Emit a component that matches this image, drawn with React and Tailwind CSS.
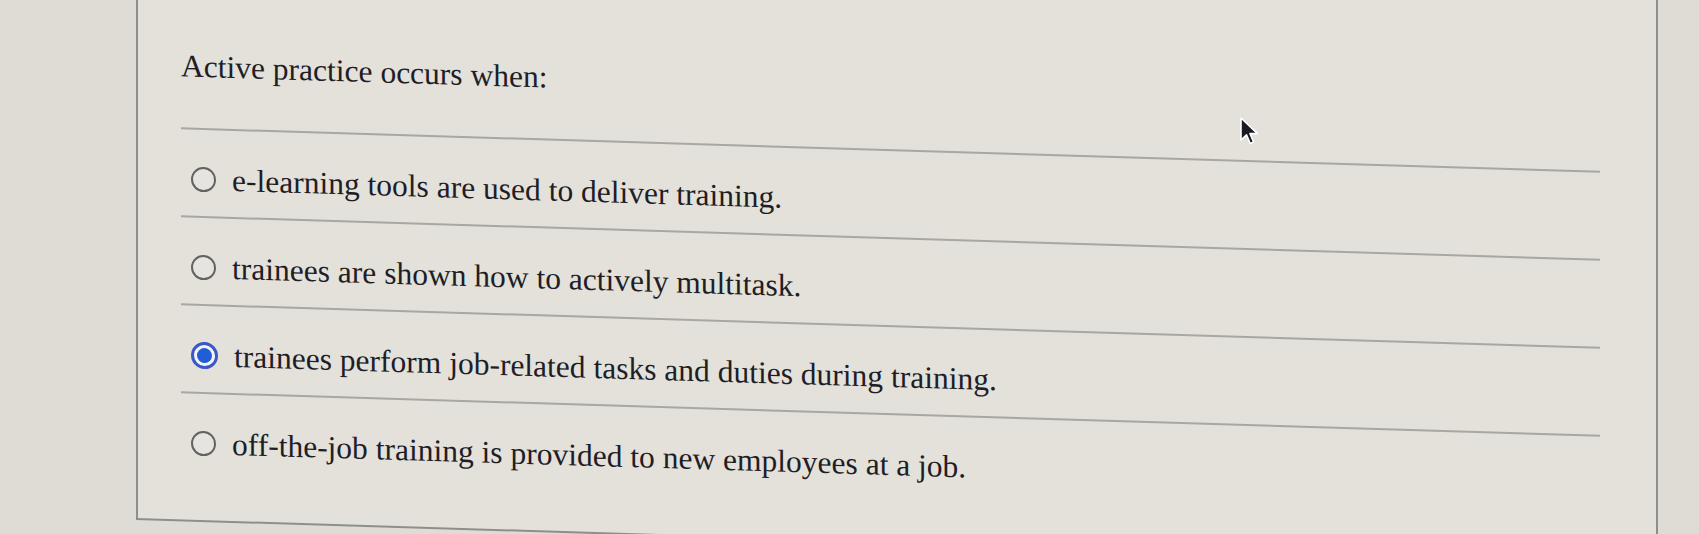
import React from 'react';

const options = [
    { id: 'a', text: 'e-learning tools are used to deliver training.' },
    { id: 'b', text: 'trainees are shown how to actively multitask.' },
    { id: 'c', text: 'trainees perform job-related tasks and duties during training.', checked: true },
    { id: 'd', text: 'off-the-job training is provided to new employees at a job.' },
];

const Radio = ({ checked }) => (
    checked ? (
        <span className="mt-[4px] w-[27px] h-[27px] shrink-0 rounded-full border-[3px] border-[#3a58c8] bg-[#f4f4f2] flex items-center justify-center">
            <span className="w-[15px] h-[15px] rounded-full bg-[#1f5ed6]" />
        </span>
    ) : (
        <span className="mt-[5px] w-[25px] h-[25px] shrink-0 rounded-full border-2 border-[#626260] bg-[#e6e4de]" />
    )
);

const Cursor = () => (
    <svg className="absolute left-[1238px] top-[116px]" width="22" height="32" viewBox="0 0 22 32">
        <path d="M3 2 L3 24 L8.5 18.8 L12.2 27.5 L15.6 26 L12 17.6 L19.5 17.6 Z" fill="#1c1a22" stroke="#ffffff" strokeWidth="1.6" strokeLinejoin="round" />
    </svg>
);

const App = () => {
    return (
        <div className="relative w-[1699px] h-[534px] overflow-hidden bg-[#dedcd5] text-[#211d26] [font-family:'Liberation_Serif',serif]">
            <div className="-mt-[80px] ml-[136px] w-[1522px] h-[600px] border-l-2 border-r-2 border-b-2 border-[#8d908a] bg-[#e3e1da] origin-top-left [transform:skewY(1.75deg)] pl-[43px] pr-[56px]">
                <h1 className="pt-[127px] text-[31.5px] leading-[36px] font-normal">Active practice occurs when:</h1>
                <div className="mt-[43px]">
                    {options.map(opt => (
                        <div key={opt.id}>
                            <div className="h-[2px] bg-[#a6a8a2]" />
                            <label className="pt-[32px] pb-[18px] pl-[10px] flex items-start gap-[16px] text-[31.5px] leading-[36px]">
                                <Radio checked={opt.checked} />
                                <span>{opt.text}</span>
                            </label>
                        </div>
                    ))}
                </div>
            </div>
            <Cursor />
        </div>
    );
};

export default App;
